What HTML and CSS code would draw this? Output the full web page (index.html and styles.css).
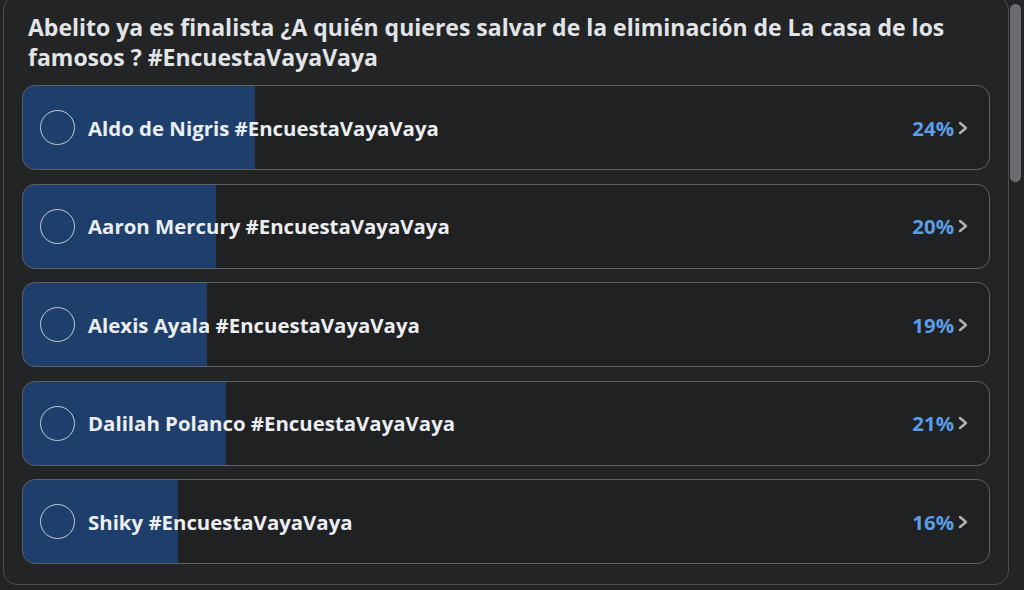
FILE: index.html
```html
<!DOCTYPE html>
<html lang="es">
<head>
<meta charset="utf-8">
<title>Encuesta</title>
<link rel="stylesheet" href="styles.css">
</head>
<body>
<div class="page">
  <section class="poll">
    <h2 class="poll-title">Abelito ya es finalista ¿A quién quieres salvar de la eliminación de La casa de los famosos ? #EncuestaVayaVaya</h2>
    <ul class="options">
      <li class="option" style="--p: 24%">
        <span class="radio"></span>
        <span class="label">Aldo de Nigris #EncuestaVayaVaya</span>
        <span class="pct">24%</span>
        <svg class="chev" viewBox="0 0 10 14" width="10" height="14"><path d="M2 2 L8 7 L2 12"/></svg>
      </li>
      <li class="option" style="--p: 20%">
        <span class="radio"></span>
        <span class="label">Aaron Mercury #EncuestaVayaVaya</span>
        <span class="pct">20%</span>
        <svg class="chev" viewBox="0 0 10 14" width="10" height="14"><path d="M2 2 L8 7 L2 12"/></svg>
      </li>
      <li class="option" style="--p: 19%">
        <span class="radio"></span>
        <span class="label">Alexis Ayala #EncuestaVayaVaya</span>
        <span class="pct">19%</span>
        <svg class="chev" viewBox="0 0 10 14" width="10" height="14"><path d="M2 2 L8 7 L2 12"/></svg>
      </li>
      <li class="option" style="--p: 21%">
        <span class="radio"></span>
        <span class="label">Dalilah Polanco #EncuestaVayaVaya</span>
        <span class="pct">21%</span>
        <svg class="chev" viewBox="0 0 10 14" width="10" height="14"><path d="M2 2 L8 7 L2 12"/></svg>
      </li>
      <li class="option" style="--p: 16%">
        <span class="radio"></span>
        <span class="label">Shiky #EncuestaVayaVaya</span>
        <span class="pct">16%</span>
        <svg class="chev" viewBox="0 0 10 14" width="10" height="14"><path d="M2 2 L8 7 L2 12"/></svg>
      </li>
    </ul>
  </section>
  <div class="scroll-thumb"></div>
</div>
</body>
</html>
```

FILE: styles.css
```css
html, body {
  margin: 0;
  padding: 0;
  background: #232426;
  overflow: hidden;
}

.page {
  position: relative;
  width: 1024px;
  height: 590px;
  overflow: hidden;
  font-family: "Open Sans", "Noto Sans", sans-serif;
  color: #e4e6eb;
}

.poll {
  margin: -4px 15px 0 3px;
  border: 1.5px solid #4b4c4f;
  border-radius: 14px;
  padding: 15px 18px 20px 18px;
}

.poll-title {
  margin: 0 0 13px 6px;
  font-size: 23px;
  line-height: 30px;
  font-weight: 700;
  color: #e2e4e8;
}

.options {
  list-style: none;
  margin: 0;
  padding: 0;
  display: flex;
  flex-direction: column;
  gap: 13.5px;
}

.option {
  box-sizing: border-box;
  height: 85px;
  display: flex;
  align-items: center;
  padding: 0 21px 0 17px;
  border: 1.5px solid #5f6064;
  border-radius: 13px;
  background: linear-gradient(to right, #1e3f6c var(--p), #202123 var(--p));
}

.radio {
  width: 33px;
  height: 33px;
  border: 1.8px solid #c3cad6;
  border-radius: 50%;
  flex: none;
}

.label {
  margin-left: 13px;
  font-size: 20.4px;
  font-weight: 700;
  color: #eceef2;
  flex: 1;
}

.pct {
  font-size: 20.4px;
  font-weight: 700;
  color: #5b9de6;
}

.chev {
  margin-left: 4px;
  fill: none;
  stroke: #b0b3b8;
  stroke-width: 2.4;
  stroke-linecap: round;
  stroke-linejoin: round;
}

.scroll-thumb {
  position: absolute;
  top: 4px;
  right: 3px;
  width: 11px;
  height: 178px;
  border-radius: 6px;
  background: #6b6c6f;
}
```
